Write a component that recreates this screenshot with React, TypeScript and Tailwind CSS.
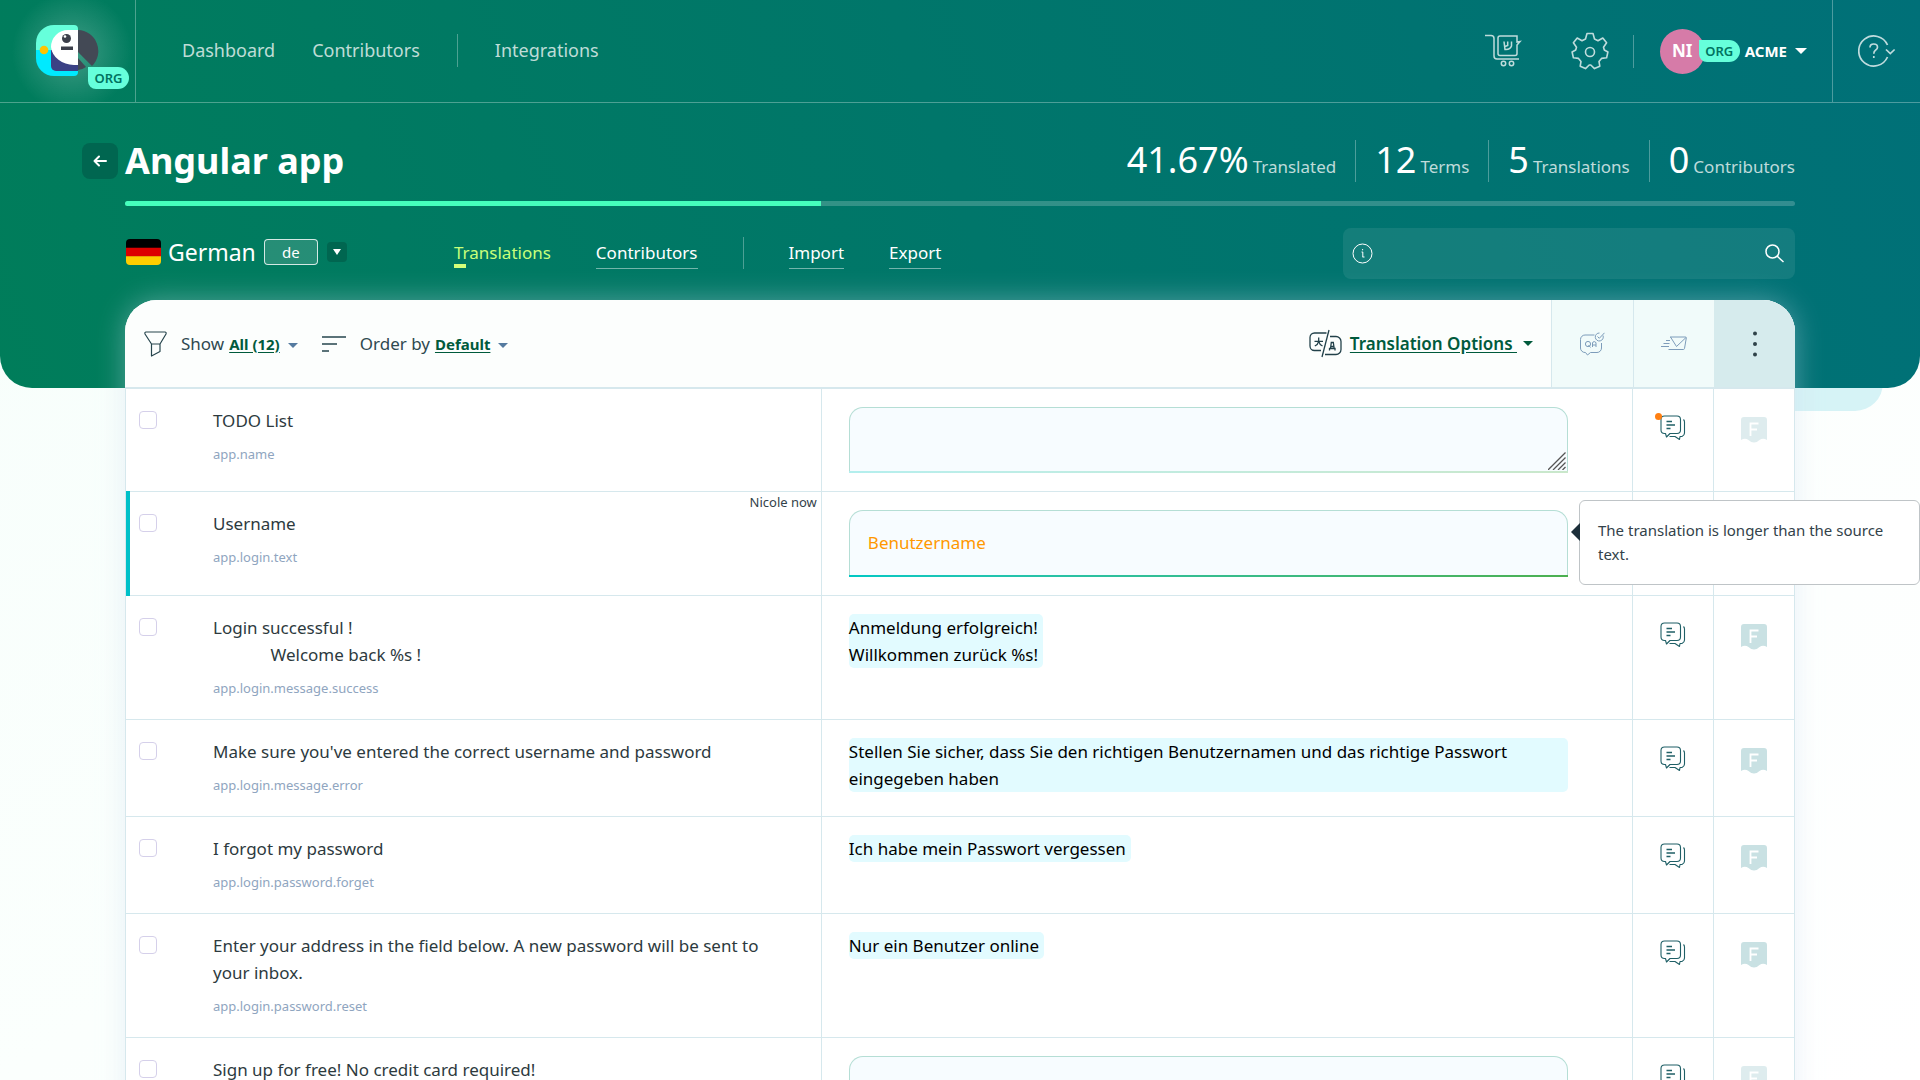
import { useState } from "react";
import type { ReactNode } from "react";
import clsx from "clsx";

type Term = {
  id: number;
  source: string;
  context: string;
  translation: string;
  editing?: boolean;
  active?: boolean;
  author?: string;
  newComment?: boolean;
  warning?: string;
};

const TERMS: Term[] = [
  { id: 1, source: "TODO List", context: "app.name", translation: "", editing: true, newComment: true },
  {
    id: 2, source: "Username", context: "app.login.text", translation: "Benutzername",
    editing: true, active: true, author: "Nicole now",
    warning: "The translation is longer than the source text.",
  },
  {
    id: 3, source: "Login successful !\n             Welcome back %s !", context: "app.login.message.success",
    translation: "Anmeldung erfolgreich!\nWillkommen zurück %s!",
  },
  {
    id: 4, source: "Make sure you've entered the correct username and password", context: "app.login.message.error",
    translation: "Stellen Sie sicher, dass Sie den richtigen Benutzernamen und das richtige Passwort eingegeben haben",
  },
  { id: 5, source: "I forgot my password", context: "app.login.password.forget", translation: "Ich habe mein Passwort vergessen" },
  {
    id: 6, source: "Enter your address in the field below. A new password will be sent to your inbox.",
    context: "app.login.password.reset", translation: "Nur ein Benutzer online",
  },
  { id: 7, source: "Sign up for free! No credit card required!", context: "app.signup.text", translation: "", editing: true },
];

const STATS = [
  { value: "41.67%", label: "Translated" },
  { value: "12", label: "Terms" },
  { value: "5", label: "Translations" },
  { value: "0", label: "Contributors" },
];

const PROGRESS = 41.67;

function Logo() {
  return (
    <svg width="63" height="51" viewBox="0 0 63 51" aria-hidden="true">
      <path d="M18 0H38a4 4 0 0 1 4 4V25H0V18A18 18 0 0 1 18 0Z" fill="#66ffdb" />
      <path d="M0 25H42V47a4 4 0 0 1-4 4H18A18 18 0 0 1 0 33Z" fill="#00eaff" />
      <path d="M15 25H42V46H20a5 5 0 0 1-5-5Z" fill="#3b4185" />
      <path d="M42 5V40H38A23 20 0 0 1 15 22A17 17 0 0 1 32 5Z" fill="#fff" />
      <path d="M42 5A21 21 0 0 1 56 41L42 27Z" fill="#434955" />
      <path d="M42 33L50 42Q46 45 42 45Z" fill="#434955" />
      <circle cx="30.500" cy="13.500" r="4.500" fill="#3c3f4a" />
      <circle cx="29" cy="11.500" r="1.300" fill="#fff" />
      <path d="M25 21.500h12v3.500h-12z" fill="#3c3f4a" />
      <circle cx="8" cy="25" r="4.300" fill="#ffc400" />
    </svg>
  );
}

function CartIcon() {
  return (
    <svg width="38" height="34" viewBox="0 0 38 34" fill="none" stroke="currentColor" strokeWidth="1.500" aria-hidden="true">
      <path d="M1 1.500H7Q10 1.500 10 4.500V22Q10 25 13 25H35" />
      <path d="M16 2H33V8L36 7.500L33 11V19.500a2 2 0 0 1-2 2H16a2 2 0 0 1-2-2V4a2 2 0 0 1 2-2Z" />
      <path d="M20 7.500L21 15.500Q26 16 27.500 12V7.500M23.700 7.500V11.500L21 12.500" />
      <circle cx="19.500" cy="29.500" r="2.200" />
      <circle cx="27.500" cy="29.500" r="2.200" />
    </svg>
  );
}

function GearIcon() {
  return (
    <svg width="38" height="38" viewBox="0 0 38 38" fill="none" stroke="currentColor" strokeWidth="1.600" strokeLinejoin="round" aria-hidden="true">
      <path d="M16 1.500H22L23.500 7L27 8.700L31.800 6L35.600 10.800L32.500 15.300L33.300 18L36.900 20L35.600 25.800L30.500 26.400L28 29.500L28.800 34.200L23.500 36.600L19.800 33H18.200L14.500 36.600L9.200 34.200L10 29.500L7.500 26.400L2.400 25.800L1.100 20L4.700 18L5.500 15.300L2.400 10.800L6.200 6L11 8.700L14.500 7Z" />
      <circle cx="19" cy="20" r="4.500" />
    </svg>
  );
}

function HelpIcon() {
  return (
    <svg width="38" height="34" viewBox="0 0 38 34" fill="none" stroke="currentColor" strokeWidth="1.700" aria-hidden="true">
      <path d="M29.500 11A15 15 0 1 0 29.500 23" />
      <path d="M12 13.500Q12 10 15.700 10Q19.500 10 19.500 13.200Q19.500 15 17.500 16.300Q15.800 17.400 15.800 19.800M15.800 22V24" />
      <path d="M28 15.500L32.300 19.500L36.600 15.500" />
    </svg>
  );
}

function FunnelIcon() {
  return (
    <svg width="23" height="26" viewBox="0 0 23 26" fill="none" stroke="#26454d" strokeWidth="1.200" strokeLinejoin="round" aria-hidden="true">
      <path d="M2 1H21Q22.500 1 22 3L16 13V20.500L7.500 25V13L1 3Q0.500 1 2 1ZM7.500 13H16" />
    </svg>
  );
}

function SortIcon() {
  return (
    <svg width="24" height="16" viewBox="0 0 24 16" stroke="#26454d" strokeWidth="1.300" aria-hidden="true">
      <path d="M0 1H24M0 8H15M0 15H7" />
    </svg>
  );
}

function TranslateIcon() {
  return (
    <svg width="33" height="29" viewBox="0 0 33 29" fill="none" stroke="#22414a" strokeWidth="1.300" aria-hidden="true">
      <path d="M17.500 4H5.500A4.500 4.500 0 0 0 1 8.500V17A4.500 4.500 0 0 0 5.500 21.500H12" />
      <path d="M20 1L13 28" />
      <path d="M21 7.500H27A5 5 0 0 1 32 12.500V20.500A5 5 0 0 1 27 25.500H16" />
      <path d="M9.700 8.500V12.300M5.500 12.300H14M9.700 12.300Q9 15.500 5.800 17M9.700 12.300Q10.500 15.500 13.500 17" />
      <path d="M20.500 21.500V19.500H26V21.500M21.500 19.500L22.300 13.500H24.300L25.200 19.500M21.500 17.500H25" />
    </svg>
  );
}

function QaIcon() {
  return (
    <svg width="25" height="24" viewBox="0 0 25 24" fill="none" stroke="#7d9cba" strokeWidth="1" aria-hidden="true">
      <path d="M14.500 3H5A4.500 4.500 0 0 0 .5 7.500V16A4.500 4.500 0 0 0 5 20.500H5.500L7.500 23L10.500 20.500H17A4.500 4.500 0 0 0 21.500 16V11" />
      <path d="M23 3.500A4 4 0 1 1 19.500 1M17.500 4.500L19.300 6.300L24.500 .8" />
      <circle cx="8" cy="12" r="2.600" />
      <path d="M8.500 13L10.500 15.500M12.500 15V11A1.800 1.800 0 0 1 16 11V15M12.500 13H16" />
    </svg>
  );
}

function MailIcon() {
  return (
    <svg width="26" height="15" viewBox="0 0 26 15" fill="none" stroke="#7d9cba" strokeWidth="1" aria-hidden="true">
      <path d="M9 1H24.500Q25.500 1 25.300 2L23.500 12.500Q23.300 13.500 22.300 13.500H7.500M9.500 1L15.500 10.500L25 1.500" />
      <path d="M5 4.500H9M2.500 7.500H8.500M0 10.500H8" />
    </svg>
  );
}

function ChatIcon() {
  return (
    <svg width="26" height="26" viewBox="0 0 26 26" fill="none" stroke="#1f5f66" strokeWidth="1.100" strokeLinejoin="round" aria-hidden="true">
      <path d="M4.500 1H17Q20.500 1 20.500 4.500V15Q20.500 18.500 17 18.500H10L6.500 22L5.500 18.500H4.500Q1 18.500 1 15V4.500Q1 1 4.500 1Z" />
      <path d="M23.500 4.500Q24.500 5.500 24.500 7V18Q24.500 20.500 22 21.500H20L19.500 24.500L15 21.500H9.500" />
      <path d="M6.500 6.500H12M6.500 10H15M6.500 13.500H10.500" strokeWidth="1.300" />
    </svg>
  );
}

function FuzzyIcon({ dim }: { dim: boolean }) {
  return (
    <svg width="26" height="26" viewBox="0 0 26 26" className={dim ? "opacity-60" : undefined} aria-hidden="true">
      <path d="M3 0H23a3 3 0 0 1 3 3V23Q22 20.500 18.500 23Q13 28 7.500 23Q4 20.500 0 23V3a3 3 0 0 1 3-3Z" fill="#c9e1e3" />
      <path d="M9.500 19V6.500H17.500M9.500 12.500H16" fill="none" stroke="#fff" strokeWidth="1.800" />
    </svg>
  );
}

function Caret({ className }: { className: string }) {
  return (
    <svg width="12" height="6" viewBox="0 0 12 6" className={className} aria-hidden="true">
      <path d="M0 0H12L6 6Z" fill="currentColor" />
    </svg>
  );
}

function OrgBadge({ className }: { className?: string }) {
  return (
    <span className={clsx("flex h-[22px] w-[41px] items-center justify-center rounded-r-[11px] rounded-bl-[8px] bg-[#66ffdb] text-[13px] leading-[22px] font-semibold text-[#007360]", className)}>
      ORG
    </span>
  );
}

function TabLink({ children }: { children: ReactNode }) {
  return (
    <a href="#" className="border-b border-white/45 text-[17px] leading-[30px] text-white">{children}</a>
  );
}

function TopBar() {
  return (
    <header className="flex h-[103px] border-b border-white/30 text-white/75">
      <a href="#" aria-label="Home" className="relative flex w-[136px] shrink-0 items-center border-r border-white/30 bg-[radial-gradient(circle_at_72px_52px,rgba(255,255,255,0.25),transparent_60px)] pb-[2px] pl-9">
        <Logo />
        <OrgBadge className="absolute top-[67px] left-[88px]" />
      </a>
      <nav className="flex flex-1 items-center gap-[37px] pb-[2px] pl-[46px] text-[18px] leading-[27px]">
        <a href="#">Dashboard</a>
        <a href="#">Contributors</a>
        <span className="h-[33px] w-px bg-white/30" />
        <a href="#">Integrations</a>
      </nav>
      <div className="flex items-center pr-[25px]">
        <button aria-label="Cart" className="mr-[49px]"><CartIcon /></button>
        <button aria-label="Settings" className="mr-6"><GearIcon /></button>
        <span className="mr-[26px] h-[33px] w-px bg-white/30" />
        <button className="flex items-center text-white">
          <span className="flex size-[45px] items-center justify-center rounded-full bg-[#d67ba8] text-[17px] font-bold">NI</span>
          <OrgBadge className="-ml-[6px]" />
          <span className="ml-[5px] text-[15px] font-bold">ACME</span>
          <Caret className="ml-2" />
        </button>
      </div>
      <button aria-label="Help" className="flex w-[88px] shrink-0 items-center border-l border-white/30 pl-[25px]"><HelpIcon /></button>
    </header>
  );
}

function ProjectHeader() {
  return (
    <section>
      <div className="flex h-[98px] items-center justify-between pt-[17px]">
        <div className="-ml-[43px] flex items-center gap-[7px]">
          <a href="#" aria-label="Back" className="flex size-9 items-center justify-center rounded-lg bg-[#006650] text-white">
            <svg width="14" height="12" viewBox="0 0 14 12" fill="none" stroke="currentColor" strokeWidth="2" strokeLinecap="round" strokeLinejoin="round" aria-hidden="true">
              <path d="M13 6H1.500M6 1.500L1.500 6L6 10.500" />
            </svg>
          </a>
          <h1 className="text-[36px] leading-[42px] font-bold text-white">Angular app</h1>
        </div>
        <dl className="flex">
          {STATS.map((s) => (
            <div key={s.label} className="flex h-[42px] flex-row-reverse items-baseline gap-1 border-l border-white/30 px-[19px] first:border-l-0 last:pr-0">
              <dt className="text-[17px] text-white/75">{s.label}</dt>
              <dd className="text-[36px] leading-[40px] text-white">{s.value}</dd>
            </div>
          ))}
        </dl>
      </div>
      <div role="progressbar" aria-label="Translated" aria-valuenow={PROGRESS} className="h-[5px] overflow-hidden rounded-full bg-white/20">
        <div className="h-full bg-[#45ffbc]" style={{ width: `${PROGRESS}%` }} />
      </div>
    </section>
  );
}

function LanguageBar() {
  const [query, setQuery] = useState("");
  return (
    <section className="flex h-[94px] items-center">
      <div className="flex w-[329px] shrink-0 items-center pb-[2px] pl-px text-white">
        <svg width="35" height="26" viewBox="0 0 35 26" className="rounded" role="img" aria-label="German flag">
          <path d="M0 0h35v9H0z" fill="#000" />
          <path d="M0 8.700h35v9H0z" fill="#d00" />
          <path d="M0 17.300h35v9H0z" fill="#ffce00" />
        </svg>
        <h2 className="ml-[7px] text-[23px] leading-[32px]">German</h2>
        <span className="ml-2 flex h-[26px] w-[54px] items-center justify-center rounded border border-white/80 bg-white/15 text-[15px] leading-[22px]">de</span>
        <button aria-label="Change language" className="ml-[9px] flex size-5 items-center justify-center rounded bg-[#006650]">
          <svg width="8" height="6" viewBox="0 0 8 6" aria-hidden="true"><path d="M0 0H8L4 6Z" fill="#fff" /></svg>
        </button>
      </div>
      <nav className="flex items-center gap-[45px]">
        <a href="#" aria-current="page" className="relative text-[17px] leading-[30px] text-[#c8ff7a]">
          Translations
          <span className="absolute bottom-0 left-0 h-1 w-3 bg-[#d4ff7a]" />
        </a>
        <TabLink>Contributors</TabLink>
        <span className="h-8 w-px bg-white/30" />
        <TabLink>Import</TabLink>
        <TabLink>Export</TabLink>
      </nav>
      <form role="search" className="ml-auto flex h-[51px] w-[452px] items-center rounded-lg bg-white/[0.08] pr-[11px] pl-[9px] text-white">
        <svg width="21" height="21" viewBox="0 0 21 21" fill="none" stroke="currentColor" strokeWidth="1" aria-hidden="true">
          <circle cx="10.500" cy="10.500" r="9.500" />
          <path d="M9.500 9H10.800V14M10.500 14H12.500M10.600 6V7.300" />
        </svg>
        <input aria-label="Search terms" value={query} onChange={(e) => setQuery(e.target.value)}
               className="mx-3 h-full min-w-0 flex-1 bg-transparent text-[17px] outline-none" />
        <button type="button" aria-label="Search">
          <svg width="19" height="19" viewBox="0 0 19 19" fill="none" stroke="currentColor" strokeWidth="1.500" aria-hidden="true">
            <circle cx="7.500" cy="7.500" r="6.500" />
            <path d="M12 12L18.500 18" />
          </svg>
        </button>
      </form>
    </section>
  );
}

function Toolbar() {
  return (
    <div className="flex h-[89px] overflow-hidden rounded-t-[32px] border-b-2 border-[#d6e8ed] bg-[#fcfefd]">
      <div className="flex flex-1 items-center pl-[19px] text-[17px] leading-[26px] text-[#2f4950]">
        <FunnelIcon />
        <span className="ml-[14px]">Show</span>
        <button aria-haspopup="menu" className="ml-[5px] flex items-center text-[15px] font-bold text-[#005a3c]">
          <span className="underline underline-offset-2">All (12)</span>
          <svg width="10" height="5" viewBox="0 0 10 5" className="mt-1 ml-2" aria-hidden="true"><path d="M0 0H10L5 5Z" fill="#557ba0" /></svg>
        </button>
        <span className="ml-6"><SortIcon /></span>
        <span className="ml-[14px]">Order by</span>
        <button aria-haspopup="menu" className="ml-[5px] flex items-center text-[15px] font-bold text-[#005a3c]">
          <span className="underline underline-offset-2">Default</span>
          <svg width="10" height="5" viewBox="0 0 10 5" className="mt-1 ml-2" aria-hidden="true"><path d="M0 0H10L5 5Z" fill="#557ba0" /></svg>
        </button>
        <button aria-haspopup="menu" className="mr-[18px] ml-auto flex items-center text-[17px] font-semibold text-[#005a3c]">
          <TranslateIcon />
          <span className="ml-2 whitespace-pre underline underline-offset-2">Translation Options </span>
          <svg width="10" height="5" viewBox="0 0 10 5" className="ml-[6px]" aria-hidden="true"><path d="M0 0H10L5 5Z" fill="#005a3c" /></svg>
        </button>
      </div>
      <button aria-label="QA checks" className="flex w-[82px] items-center justify-center border-l border-[#d6e8ed] bg-[#f1fbfa]"><QaIcon /></button>
      <button aria-label="Send notification" className="flex w-[81px] items-center justify-center border-l border-[#d6e8ed] bg-[#f1fbfa]"><MailIcon /></button>
      <button aria-label="More" className="flex w-[81px] items-center justify-center bg-[#d6ebed]">
        <svg width="4" height="26" viewBox="0 0 4 26" fill="#2f4248" aria-hidden="true">
          <circle cx="2" cy="2.500" r="2" /><circle cx="2" cy="13" r="2" /><circle cx="2" cy="23.500" r="2" />
        </svg>
      </button>
    </div>
  );
}

function TranslationField({ term }: { term: Term }) {
  const [value, setValue] = useState(term.translation);
  return (
    <div className="relative">
      <textarea aria-label={`Translation of ${term.source}`} value={value} rows={1}
                onChange={(e) => setValue(e.target.value)}
                className={clsx(
                  "block w-full resize-none rounded-t-[14px] border border-b-0 border-[#b5ded5] bg-[#f7fcff] px-[18px] pt-[18px] text-[17px] leading-[27px] text-[#ff9800] outline-none",
                  term.active ? "h-[65px]" : "h-16",
                )} />
      <div className={clsx("h-[2px] bg-linear-to-r from-[#00c8c4] to-[#4cb050]", !term.active && "opacity-30")} />
      {!term.active && (
        <svg width="18" height="18" viewBox="0 0 18 18" className="absolute right-[2px] bottom-[3px]" stroke="#555" strokeWidth="1.300" aria-hidden="true">
          <path d="M0 18L17.500 .5M5 18L17.500 5.500M10 18L17.500 10.500M14.500 18L17.500 15" />
        </svg>
      )}
      {term.warning && (
        <div role="tooltip" className="absolute -top-[10px] left-full z-10 ml-[11px] w-[341px] rounded-md border border-[#bfc4c7] bg-white pt-[17px] pr-6 pb-[18px] pl-[18px] text-[15px] leading-6 text-[#33424a]">
          <svg width="9" height="18" viewBox="0 0 9 18" className="absolute top-[22px] right-full" aria-hidden="true"><path d="M9 0V18L0 9Z" fill="#1c2f3a" /></svg>
          {term.warning}
        </div>
      )}
    </div>
  );
}

function TermRow({ term }: { term: Term }) {
  return (
    <tr className="align-top">
      <td className="relative h-px border-b border-l border-[#d6e8ed]">
        {term.active && <span className="absolute -top-px -bottom-px left-0 w-[4px] bg-[#00c0c8]" />}
        {term.author && <span className="absolute top-0 right-1 text-[13px] leading-[20px] text-[#33424a]">{term.author}</span>}
        <div className="flex pt-[18px] pr-7 pb-5 pl-[13px]">
          <input type="checkbox" aria-label={`Select ${term.context}`} className="mt-1 size-[18px] shrink-0 appearance-none rounded border border-[#d5d0ea] bg-white" />
          <div className="ml-[56px]">
            <p className="text-[17px] leading-[27px] whitespace-pre-wrap text-[#2d3a3e]">{term.source}</p>
            <p className="mt-[10px] text-[13px] leading-[21px] text-[#8fa5c0]">{term.context}</p>
          </div>
        </div>
      </td>
      <td className="border-b border-l border-[#d6e8ed] py-[18px] pr-16 pl-[27px]">
        {term.editing ? (
          <TranslationField term={term} />
        ) : (
          <p className="w-fit rounded-[5px] bg-[#e2fbff] pr-[5px] text-[17px] leading-[27px] whitespace-pre-line text-black">{term.translation}</p>
        )}
      </td>
      <td className="border-b border-l border-[#d6e8ed] pt-[26px]">
        <button aria-label="Comments" className="relative mx-auto block">
          <ChatIcon />
          {term.newComment && <span className="absolute -top-[2px] -left-[5px] size-[7px] rounded-full bg-[#ff7f11]" />}
        </button>
      </td>
      <td className="border-x border-b border-[#d6e8ed] pt-7">
        <button aria-label="Mark as fuzzy" className="mx-auto block"><FuzzyIcon dim={!term.translation} /></button>
      </td>
    </tr>
  );
}

export default function App() {
  return (
    <div className="relative h-screen overflow-hidden bg-linear-to-br from-[#f6fefb] via-[#fbfffd] to-white font-['Noto_Sans',sans-serif]">
      <div className="absolute top-0 right-[37px] left-1/2 h-[411px] rounded-br-[28px] bg-[#d6f3f6]" />
      <div className="absolute inset-x-0 top-0 h-[388px] rounded-b-[32px] bg-[linear-gradient(70deg,#007d5a,#00766a_50%,#007078)]" />
      <div className="relative">
        <TopBar />
        <main className="px-[125px]">
          <ProjectHeader />
          <LanguageBar />
          <div className="rounded-t-[32px] bg-white shadow-[0_0_28px_rgba(205,220,240,0.4)]">
            <Toolbar />
            <table className="w-full table-fixed border-separate border-spacing-0">
              <colgroup>
                <col className="w-5/12" />
                <col />
                <col className="w-[81px]" />
                <col className="w-[82px]" />
              </colgroup>
              <tbody>
                {TERMS.map((t) => <TermRow key={t.id} term={t} />)}
              </tbody>
            </table>
          </div>
        </main>
      </div>
    </div>
  );
}
